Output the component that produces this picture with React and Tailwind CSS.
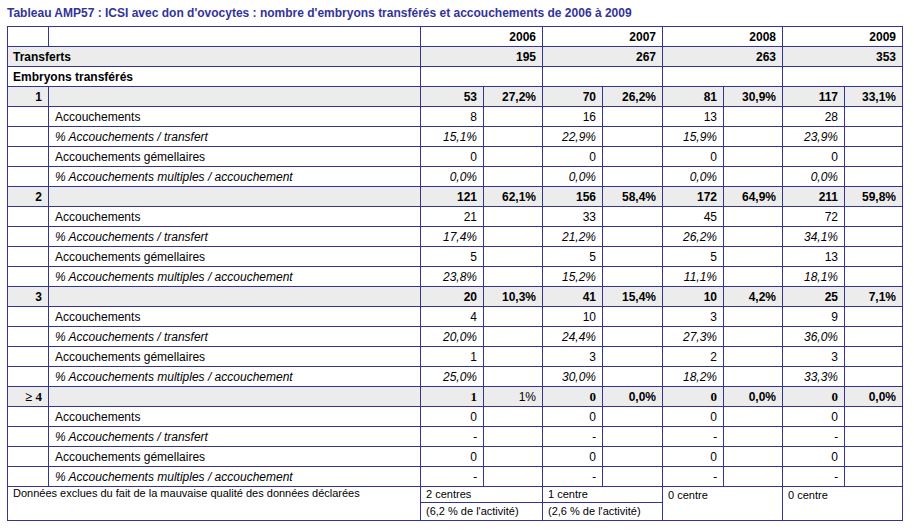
import React from 'react'

const years = ['2006', '2007', '2008', '2009']
const transferts = ['195', '267', '263', '353']

// each group: header pairs (count, share) then the four detail rows
const groups = [
  {
    label: '1',
    head: [['53', '27,2%'], ['70', '26,2%'], ['81', '30,9%'], ['117', '33,1%']],
    rows: [
      ['8', '16', '13', '28'],
      ['15,1%', '22,9%', '15,9%', '23,9%'],
      ['0', '0', '0', '0'],
      ['0,0%', '0,0%', '0,0%', '0,0%'],
    ],
  },
  {
    label: '2',
    head: [['121', '62,1%'], ['156', '58,4%'], ['172', '64,9%'], ['211', '59,8%']],
    rows: [
      ['21', '33', '45', '72'],
      ['17,4%', '21,2%', '26,2%', '34,1%'],
      ['5', '5', '5', '13'],
      ['23,8%', '15,2%', '11,1%', '18,1%'],
    ],
  },
  {
    label: '3',
    head: [['20', '10,3%'], ['41', '15,4%'], ['10', '4,2%'], ['25', '7,1%']],
    rows: [
      ['4', '10', '3', '9'],
      ['20,0%', '24,4%', '27,3%', '36,0%'],
      ['1', '3', '2', '3'],
      ['25,0%', '30,0%', '18,2%', '33,3%'],
    ],
  },
  {
    label: '≥ 4',
    serif: true,
    head: [['1', '1%'], ['0', '0,0%'], ['0', '0,0%'], ['0', '0,0%']],
    rows: [
      ['0', '0', '0', '0'],
      ['-', '-', '-', '-'],
      ['0', '0', '0', '0'],
      ['-', '-', '-', '-'],
    ],
  },
]

const subLabels = [
  { text: 'Accouchements', italic: false },
  { text: '% Accouchements / transfert', italic: true },
  { text: 'Accouchements gémellaires', italic: false },
  { text: '% Accouchements multiples / accouchement', italic: true },
]

const td = 'border border-[#333399] h-[20px] p-0 align-middle'

function GroupRows({ g }) {
  return (
    <>
      <tr className="bg-[#ececec] font-bold">
        <td className={`${td} text-right pr-[6px] ${g.serif ? "font-['Liberation_Serif',serif] text-[13px]" : ''}`}>{g.label}</td>
        <td className={td}></td>
        {g.head.map(([n, p], i) => (
          <React.Fragment key={i}>
            <td className={`${td} text-right pr-[6px] ${g.serif ? "font-['Liberation_Serif',serif] text-[13px]" : ''}`}>{n}</td>
            <td className={`${td} text-right pr-[6px] ${g.serif && p === '1%' ? 'font-normal' : ''}`}>{p}</td>
          </React.Fragment>
        ))}
      </tr>
      {g.rows.map((vals, r) => (
        <tr key={r} className={subLabels[r].italic ? 'italic' : ''}>
          <td className={td}></td>
          <td className={`${td} pl-[6px]`}>{subLabels[r].text}</td>
          {vals.map((v, i) => (
            <React.Fragment key={i}>
              <td className={`${td} text-right pr-[6px]`}>{v}</td>
              <td className={td}></td>
            </React.Fragment>
          ))}
        </tr>
      ))}
    </>
  )
}

export default function App() {
  return (
    <div className="w-[914px] h-[531px] bg-white pl-[7px] pt-[6px] font-['Liberation_Sans',Arial,sans-serif] text-black">
      <div className="text-[12px] leading-[14px] font-bold text-[#333399]">
        Tableau AMP57 : ICSI avec don d'ovocytes : nombre d'embryons transférés et accouchements de 2006 à 2009
      </div>
      <table className="mt-[6px] border-collapse table-fixed text-[12px] leading-[14px]">
        <colgroup>
          <col className="w-[41px]" />
          <col className="w-[372px]" />
          <col className="w-[63px]" />
          <col className="w-[59px]" />
          <col className="w-[60px]" />
          <col className="w-[60px]" />
          <col className="w-[61px]" />
          <col className="w-[59px]" />
          <col className="w-[62px]" />
          <col className="w-[58px]" />
        </colgroup>
        <tbody>
          <tr className="font-bold">
            <td className={td}></td>
            <td className={td}></td>
            {years.map((y) => (
              <td key={y} colSpan={2} className={`${td} text-right pr-[6px]`}>{y}</td>
            ))}
          </tr>
          <tr className="bg-[#ececec] font-bold">
            <td colSpan={2} className={`${td} pl-[5px]`}>Transferts</td>
            {transferts.map((t, i) => (
              <td key={i} colSpan={2} className={`${td} text-right pr-[6px]`}>{t}</td>
            ))}
          </tr>
          <tr className="font-bold">
            <td colSpan={2} className={`${td} pl-[5px]`}>Embryons transférés</td>
            {years.map((y) => (
              <td key={y} colSpan={2} className={td}></td>
            ))}
          </tr>
          {groups.map((g) => (
            <GroupRows key={g.label} g={g} />
          ))}
          <tr className="text-[11px] leading-[13px]">
            <td colSpan={2} rowSpan={2} className="border border-[#333399] p-0 pl-[5px] align-top h-[16px]">
              Données exclues du fait de la mauvaise qualité des données déclarées
            </td>
            <td colSpan={2} className="border border-[#333399] p-0 pl-[5px] h-[16px] align-middle">2 centres</td>
            <td colSpan={2} className="border border-[#333399] p-0 pl-[5px] h-[16px] align-middle">1 centre</td>
            <td colSpan={2} rowSpan={2} className="border border-[#333399] p-0 pl-[5px] pt-[2px] align-top">0 centre</td>
            <td colSpan={2} rowSpan={2} className="border border-[#333399] p-0 pl-[5px] pt-[2px] align-top">0 centre</td>
          </tr>
          <tr className="text-[11px] leading-[13px]">
            <td colSpan={2} className="border border-[#333399] p-0 pl-[5px] h-[18px] align-middle">(6,2 % de l'activité)</td>
            <td colSpan={2} className="border border-[#333399] p-0 pl-[5px] h-[18px] align-middle">(2,6 % de l'activité)</td>
          </tr>
        </tbody>
      </table>
    </div>
  )
}
